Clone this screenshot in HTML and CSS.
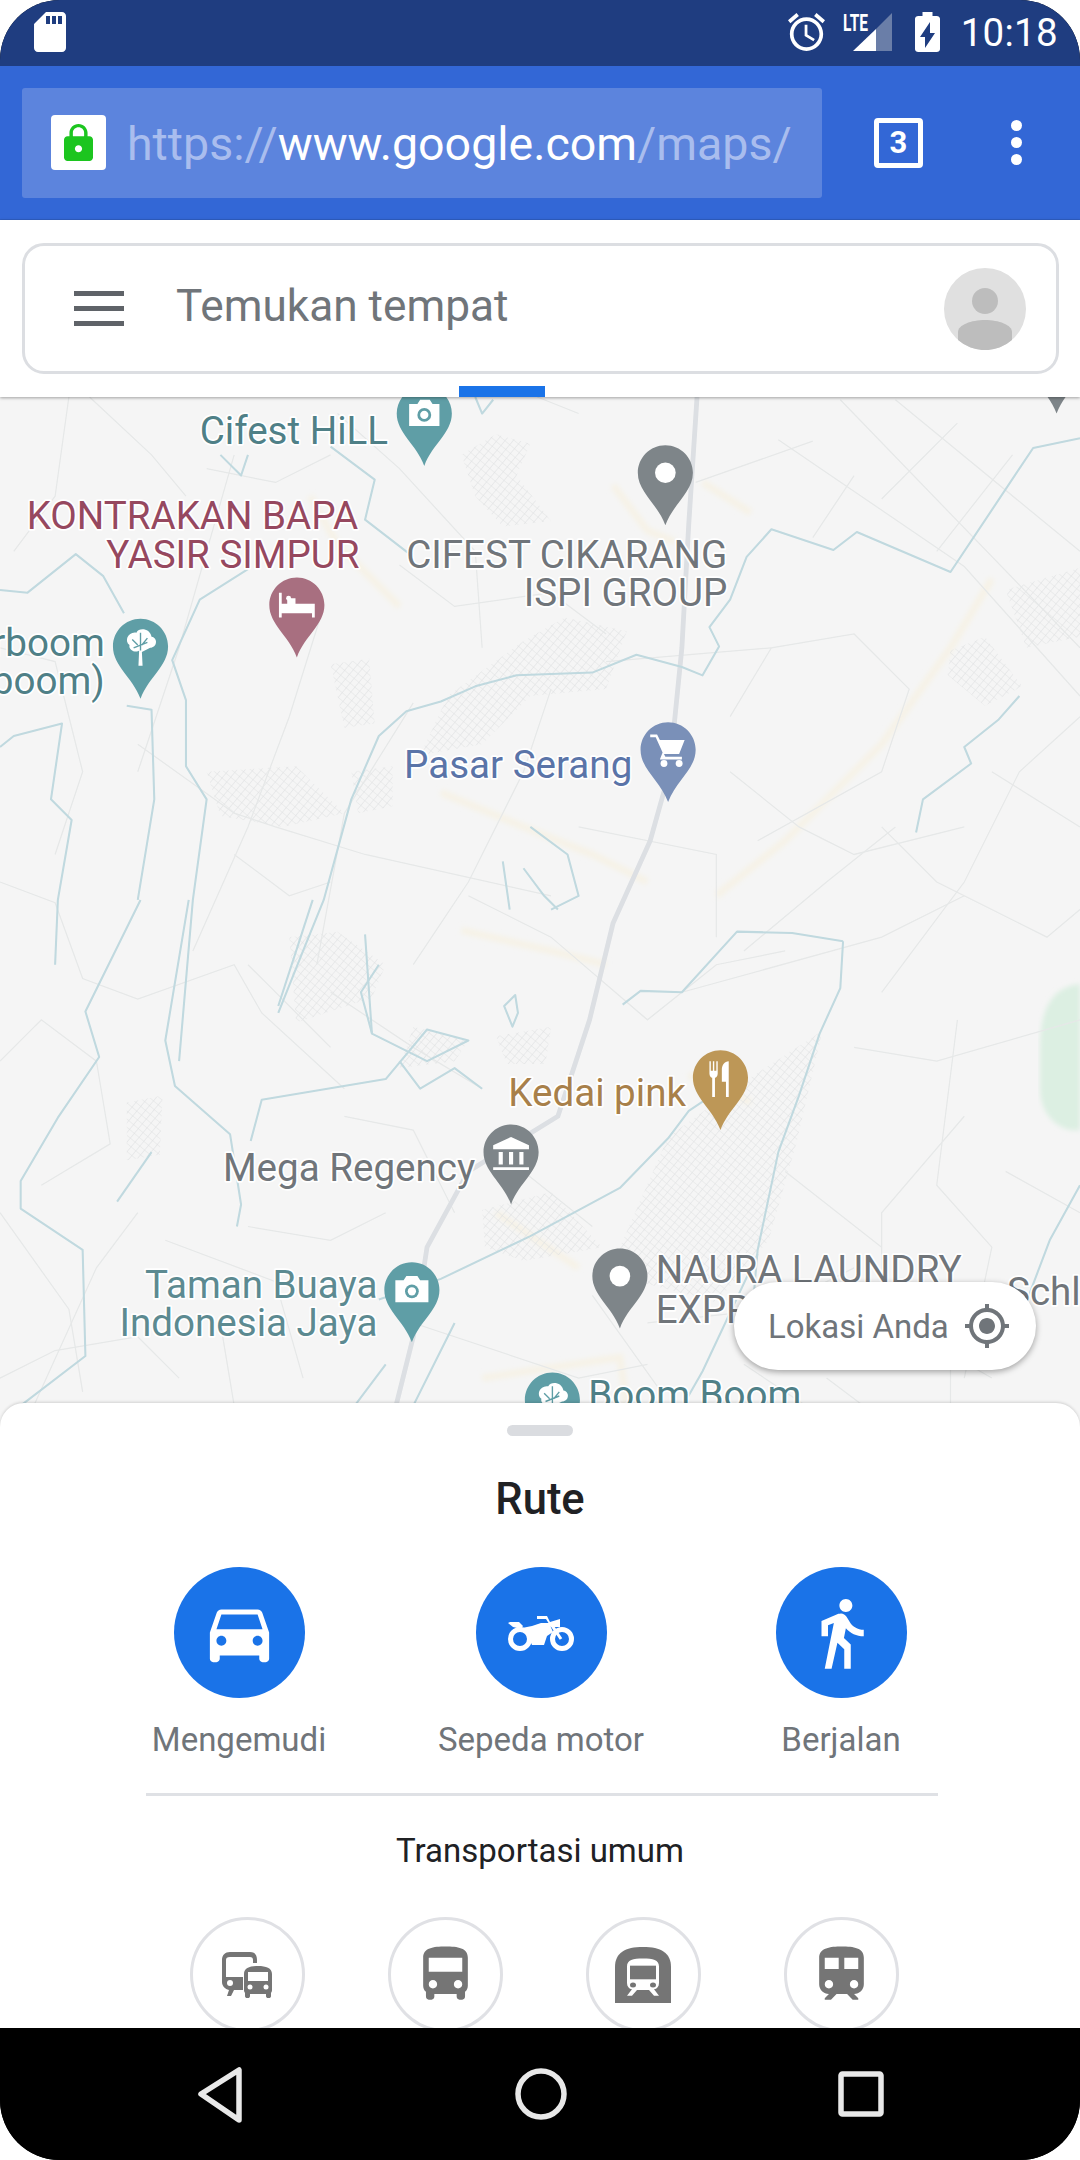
FILE: index.html
```html
<!DOCTYPE html>
<html lang="id">
<head>
<meta charset="utf-8">
<title>Google Maps</title>
<link rel="stylesheet" href="styles.css">
</head>
<body>
<div class="phone">
  <div class="status">
    <svg class="ic-sd" viewBox="4 2 16 20" preserveAspectRatio="none"><path d="M18 2h-8L4.02 8 4 20c0 1.1.9 2 2 2h12c1.1 0 2-.9 2-2V4c0-1.1-.9-2-2-2zm-6 6h-2V4h2v4zm3 0h-2V4h2v4zm3 0h-2V4h2v4z"/></svg>
    <div class="status-right">
      <svg class="ic-alarm" viewBox="2 1.8 20 20.2" preserveAspectRatio="none"><path d="M22 5.72l-4.6-3.86-1.29 1.53 4.6 3.86L22 5.72zM7.88 3.39L6.6 1.86 2 5.71l1.29 1.53 4.59-3.85zM12.5 8H11v6l4.75 2.85.75-1.23-4-2.37V8zM12 4c-4.97 0-9 4.03-9 9s4.03 9 9 9c4.97 0 9-4.03 9-9s-4.03-9-9-9zm0 16c-3.87 0-7-3.13-7-7s3.13-7 7-7 7 3.13 7 7-3.13 7-7 7z"/></svg>
      <svg class="ic-signal" viewBox="0 0 50 40">
        <text class="lte" x="0" y="19" textLength="25" lengthAdjust="spacingAndGlyphs">LTE</text>
        <path class="sig-dim" d="M49 1V39H33V17z"/>
        <path d="M33 17V39H10z"/>
      </svg>
      <svg class="ic-batt" viewBox="7 2 10 20" preserveAspectRatio="none"><path d="M15.67 4H14V2h-4v2H8.33C7.6 4 7 4.6 7 5.33v15.33C7 21.4 7.6 22 8.33 22h7.33c.74 0 1.34-.6 1.34-1.33V5.33C17 4.6 16.4 4 15.67 4zM11 20v-5.5H9L13 7v5.5h2L11 20z"/></svg>
      <span class="clock">10:18</span>
    </div>
  </div>

  <div class="toolbar">
    <div class="urlbox">
      <span class="lockbox">
        <svg class="ic-lock" viewBox="4 1 16 21" preserveAspectRatio="none"><path d="M18 8h-1V6c0-2.76-2.24-5-5-5S7 3.24 7 6v2H6c-1.1 0-2 .9-2 2v10c0 1.1.9 2 2 2h12c1.1 0 2-.9 2-2V10c0-1.1-.9-2-2-2zm-6 9c-1.1 0-2-.9-2-2s.9-2 2-2 2 .9 2 2-.9 2-2 2zm3.1-9H8.9V6c0-1.71 1.39-3.1 3.1-3.1 1.71 0 3.1 1.39 3.1 3.1v2z"/></svg>
      </span>
      <span class="url"><span class="dim">https://</span>www.google.com<span class="dim">/maps/</span></span>
    </div>
    <span class="tabs">3</span>
    <span class="dots"><i></i><i></i><i></i></span>
  </div>

  <div class="header">
    <div class="search">
      <span class="burger"><i></i><i></i><i></i></span>
      <span class="search-text">Temukan tempat</span>
      <svg class="avatar" viewBox="0 0 82 82">
        <circle class="av-bg" cx="41" cy="41" r="41"/>
        <circle class="av-fg" cx="41" cy="33" r="13"/>
        <path class="av-fg" d="M14 72V64C14 57 27 52 41 52S68 57 68 64V72A41 41 0 0 1 14 72z"/>
      </svg>
    </div>
    <span class="tab-mark"></span>
  </div>

  <div class="map">
    <svg class="map-svg" viewBox="0 288 784 747.5" preserveAspectRatio="none">
      <defs>
        <pattern id="hatch" width="4.5" height="4.5" patternUnits="userSpaceOnUse" patternTransform="rotate(40)">
          <path d="M0 0H4.500M0 0V4.500" class="hatch-line"/>
        </pattern>
        <path id="pin" d="M0-20C-11-20-20-11-20 0C-20 14-6 22 0 38C6 22 20 14 20 0C20-11 11-20 0-20z"/>
        <filter id="soft" x="-5%" y="-5%" width="110%" height="110%"><feGaussianBlur stdDeviation=".5"/></filter>
        <filter id="softer" x="-5%" y="-5%" width="110%" height="110%"><feGaussianBlur stdDeviation="2"/></filter>
      </defs>
      <rect class="land" x="0" y="288" width="784" height="748"/>
      <path class="park" d="M784 714C765 716 755 730 755 760V790C755 810 770 822 784 820z" filter="url(#softer)"/>

      <g class="yroads" filter="url(#softer)">
        <path d="M445 352L470 385L490 393M510 350L545 372"/>
        <path d="M225 360L245 395L290 440"/>
        <path d="M720 420L690 470L640 540L600 580L570 610L520 650"/>
        <path d="M320 575L380 600L430 620L470 640"/>
        <path d="M335 675L400 690L440 700M500 780L545 800"/>
        <path d="M360 880L420 920M350 1000L450 985L455 1020"/>
      </g>

      <g class="hatch" filter="url(#soft)">
        <path d="M335 330L360 315L385 322L375 345L400 378L365 382L345 360z"/>
        <path d="M380 465L410 448L455 458L440 500L385 505L350 540L305 548L325 505z"/>
        <path d="M240 482L268 478L272 525L250 528z"/>
        <path d="M690 472L715 462L742 498L715 512L688 490z"/>
        <path d="M730 428L784 412V462L745 470z"/>
        <path d="M150 560L215 556L250 590L205 600L160 592zM255 560L285 556L285 585L260 590z"/>
        <path d="M210 680L245 676L280 700L270 724L215 742z"/>
        <path d="M92 800L118 795L116 838L92 842z"/>
        <path d="M360 752L400 745L396 772L368 772z"/>
        <path d="M450 905L485 825L540 785L597 748L578 830L558 900L520 945L445 925z"/>
        <path d="M350 878L400 865L437 905L380 915L352 905z"/>
        <path d="M300 745L340 755L330 770L290 775z"/>
      </g>

      <g class="roads" filter="url(#soft)">
        <path d="M610 290L784 470M565 319L700 411L784 505M650 290L784 400M695 307L640 362M735 330L680 400M620 345L590 390"/>
        <path d="M505 350L590 320M50 288L40 360L10 400M65 288L110 330L135 360M170 330L130 470L100 560"/>
        <path d="M390 288L420 300M235 440L210 520L180 600L140 690M300 510L250 590L230 700"/>
        <path d="M550 610L640 560L660 500L620 460L560 470L530 520"/>
        <path d="M640 600L680 640L760 680L784 660M640 720L700 640L740 560L784 520"/>
        <path d="M0 640L40 655L60 710L100 725L170 700L190 735L250 790"/>
        <path d="M340 650L400 680L470 740L520 700L570 690M495 720L640 680L700 650"/>
        <path d="M0 770L30 740L70 770L80 830L30 860M0 880L50 950L60 1010"/>
        <path d="M695 740L680 860L720 905L700 1000M700 810L640 880L640 960M570 850L640 905"/>
        <path d="M120 900L200 930L220 1000M300 960L420 1000L470 990M470 960L560 950L620 920"/>
        <path d="M240 720L300 760L350 790M380 850L430 890M430 940L480 1010"/>
        <path d="M0 1000L40 980L100 970L130 1000M160 960L170 1020M600 1000L640 1030M690 1030L690 990"/>
        <path d="M100 540L170 590L200 600L265 620L400 650M440 480L560 470"/>
        <path d="M540 690L600 640L650 600M245 300L290 340L345 400L350 470"/>
        <path d="M400 500L380 560L340 640L300 700M530 560L580 600L620 620L700 600M720 560L784 600"/>
        <path d="M290 410L330 440L400 430L440 460M150 340L200 350L240 330M420 600L520 620L520 680"/>
        <path d="M0 470L40 480L60 560L40 620M170 620L210 650L240 640M180 700L240 760"/>
        <path d="M620 760L680 770L784 740M730 850L784 880M650 960L720 1000M540 990L600 1030"/>
        <path d="M20 1030L70 920L100 880M180 890L240 900L280 880M330 880L300 820L250 810"/>
      </g>

      <path class="highway" filter="url(#soft)" d="M506 288L500 380L495 470L486 560L472 610L445 670L428 740L405 810L340 850L310 905L300 970L285 1030"/>

      <g class="water" filter="url(#soft)">
        <path d="M784 318L750 325L690 415L622 386L605 399L560 384L542 404L530 435L515 455L522 469L510 490L495 484L462 475L430 488L375 490L345 498L320 509L295 516L275 534L255 580L235 653L220 690L202 735"/>
        <path d="M240 324L272 348L265 377L300 404"/>
        <path d="M160 330L175 345L180 330M345 288L350 300L358 290"/>
        <path d="M0 428L20 430L55 402L75 418L90 445"/>
        <path d="M180 413L145 435L125 479L135 508L135 556L150 580L140 653L130 770"/>
        <path d="M92 512L110 515L112 580L100 653"/>
        <path d="M0 542L10 534L45 525L37 580L52 595L42 653L40 700"/>
        <path d="M740 505L725 522L700 542L705 554L670 580L665 604"/>
        <path d="M612 683L610 717L595 750L580 795L565 836L550 907L545 965"/>
        <path d="M452 729L465 719L495 720L535 676L575 677L612 683"/>
        <path d="M542 778L500 806L485 826L450 862L385 897L320 928L275 943"/>
        <path d="M102 653L62 734L72 767L42 811L15 857L15 877L60 907L62 984L15 1020"/>
        <path d="M137 653L120 755L127 788L167 823L175 874L172 890"/>
        <path d="M227 653L202 730"/>
        <path d="M265 678L270 750L310 770L340 755L310 747L280 783L190 798L182 828"/>
        <path d="M290 770L305 790L330 775L350 790M270 750L262 720L275 700"/>
        <path d="M85 872L110 836"/>
        <path d="M372 745L366 730L374 722L376 735z"/>
        <path d="M365 625L370 660M380 630L395 650L405 660M385 600L412 620L420 650L400 660"/>
        <path d="M784 860L762 900L745 945L725 970"/>
        <path d="M550 910L510 995L490 1030M330 960L300 1020M250 1030L280 990"/>
      </g>

      <g class="pin-g" transform="translate(767 262)"><use href="#pin"/></g>

      <g class="teal" transform="translate(308 300)"><use href="#pin"/>
        <path class="w" d="M-11-7H-5L-3-10H4L6-7H11V9H-11z"/><circle class="cut" cx="0" cy="1" r="5"/><circle class="w" cx="0" cy="1" r="3"/></g>
      <text class="lbl t-teal" x="145" y="321">Cifest HiLL</text>

      <g class="pin-g" transform="translate(483 343)"><use href="#pin"/><circle class="w" cy="0" r="7.5"/></g>

      <text class="lbl t-rose end" x="260" y="383">KONTRAKAN BAPA</text>
      <text class="lbl t-rose end" x="261" y="411">YASIR SIMPUR</text>
      <g class="rose" transform="translate(215.5 439)"><use href="#pin"/>
        <path class="w" d="M-13-9H-11V-1H-7V-5H-1V-1H13V9H11V6H-11V9H-13z"/><circle class="w" cx="-6" cy="-5" r="1.800"/></g>

      <text class="lbl t-gray end" x="528" y="411">CIFEST CIKARANG</text>
      <text class="lbl t-gray end" x="528" y="439">ISPI GROUP</text>

      <text class="lbl t-teal end" x="76" y="475">rboom</text>
      <text class="lbl t-teal end" x="76" y="503">boom)</text>
      <g class="teal" transform="translate(102 469)"><use href="#pin"/>
        <path class="w" d="M-1.500 14H1.500L1 4L7 1C12 1 13-6 8-7C7-13-1-14-3-10C-9-11-12-4-8-1C-9 3-3 5-1 3z"/>
        <path class="teal-cut" d="M-6-5L-2-1M5-6L1-1M-5 1L5-3M0-10V3"/></g>

      <text class="lbl t-blue end" x="459" y="564">Pasar Serang</text>
      <g class="blue" transform="translate(485 544)"><use href="#pin"/>
        <path class="w" d="M-13-11H-8L-6-7H12L8 3H-3L-2 5H10V7H-6L-4 2L-9-9H-13z"/><circle class="w" cx="-3" cy="10" r="2.500"/><circle class="w" cx="8" cy="10" r="2.500"/></g>

      <text class="lbl t-gold" x="369" y="802">Kedai pink</text>
      <g class="gold" transform="translate(523 782)"><use href="#pin"/>
        <path class="w" d="M-8-12H-7V-5H-5.500V-12H-4.500V-5H-3V-12H-2V-3C-2-1-3 0-4 0V14H-6V0C-7 0-8-1-8-3zM6-12V14H4V3H1V-6C1-9 3-12 6-12z"/></g>

      <text class="lbl t-gray end" x="345" y="856">Mega Regency</text>
      <g class="pin-g" transform="translate(371 836)"><use href="#pin"/>
        <path class="w" d="M0-11L13-5V-2H-13V-5zM-9 0H-6V9H-9zM-1.500 0H1.500V9H-1.500zM6 0H9V9H6zM-13 11H13V13H-13z"/></g>

      <text class="lbl t-teal2 end" x="274" y="941">Taman Buaya</text>
      <text class="lbl t-teal2 end" x="274" y="969">Indonesia Jaya</text>
      <g class="teal" transform="translate(299 936)"><use href="#pin"/>
        <path class="w" d="M-12-7H-6L-4-10H4L6-7H12V9H-12z"/><circle class="cut" cx="0" cy="1" r="5"/><circle class="w" cx="0" cy="1" r="3"/></g>

      <g class="pin-g" transform="translate(450 926)"><use href="#pin"/><circle class="w" cy="0" r="7.500"/></g>
      <text class="lbl t-gray" x="476" y="930">NAURA LAUNDRY</text>
      <text class="lbl t-gray" x="476" y="959">EXPRESS</text>
      <text class="lbl t-gray" x="731" y="946">Schlu</text>

      <g class="teal" transform="translate(401 1016)"><use href="#pin"/>
        <path class="w" d="M-1.500 14H1.500L1 4L7 1C12 1 13-6 8-7C7-13-1-14-3-10C-9-11-12-4-8-1C-9 3-3 5-1 3z"/>
        <path class="teal-cut" d="M-6-5L-2-1M5-6L1-1M-5 1L5-3M0-10V3"/></g>
      <text class="lbl t-teal" x="427" y="1021">Boom Boom</text>
    </svg>

    <div class="locate">
      <span class="locate-text">Lokasi Anda</span>
      <svg class="ic-gps" viewBox="0 0 24 24"><path d="M12 8c-2.210 0-4 1.790-4 4s1.790 4 4 4 4-1.790 4-4-1.790-4-4-4zm8.940 3c-.46-4.170-3.770-7.480-7.940-7.940V1h-2v2.060C6.830 3.520 3.520 6.830 3.060 11H1v2h2.060c.46 4.170 3.770 7.480 7.940 7.940V23h2v-2.060c4.170-.46 7.480-3.770 7.940-7.940H23v-2h-2.060zM12 19c-3.870 0-7-3.130-7-7s3.130-7 7-7 7 3.130 7 7-3.130 7-7 7z"/></svg>
    </div>
  </div>

  <div class="sheet">
    <span class="handle"></span>
    <h1 class="title">Rute</h1>
    <div class="modes">
      <div class="mode">
        <span class="round">
          <svg class="ic-car" viewBox="0 0 24 24"><path d="M18.920 6.010C18.720 5.420 18.160 5 17.500 5h-11c-.66 0-1.210.42-1.420 1.010L3 12v8c0 .55.45 1 1 1h1c.55 0 1-.45 1-1v-1h12v1c0 .55.45 1 1 1h1c.55 0 1-.45 1-1v-8l-2.080-5.990zM6.500 16c-.83 0-1.500-.67-1.500-1.500S5.670 13 6.500 13s1.500.67 1.500 1.500S7.330 16 6.500 16zm11 0c-.83 0-1.500-.67-1.500-1.500s.67-1.500 1.500-1.500 1.500.67 1.500 1.500-.67 1.500-1.500 1.500zM5 11l1.500-4.500h11L19 11H5z"/></svg>
        </span>
        <span class="mode-label">Mengemudi</span>
      </div>
      <div class="mode">
        <span class="round">
          <svg class="ic-bike" viewBox="0 0 66 36">
            <circle class="wheel" cx="12" cy="24" r="9.500"/>
            <circle class="wheel" cx="54" cy="24" r="9.500"/>
            <path d="M0 8L2 7H11L15 11L13 14L5 12zM14 13L24 11L33 8H41L45 17L39 21L36 30H24L20 21zM29 1H39L42 7L52 4V12L43 12L38 4H29z"/>
            <path class="fork" d="M43 9L53 24"/>
          </svg>
        </span>
        <span class="mode-label">Sepeda motor</span>
      </div>
      <div class="mode">
        <span class="round">
          <svg class="ic-walk" viewBox="0 0 24 24"><path d="M13.500 5.500c1.100 0 2-.9 2-2s-.9-2-2-2-2 .9-2 2 .9 2 2 2zM9.800 8.900L7 23h2.100l1.800-8 2.100 2v6h2v-7.500l-2.100-2 .6-3C14.800 12 16.800 13 19 13v-2c-1.900 0-3.500-1-4.300-2.400l-1-1.600c-.4-.6-1-1-1.700-1-.3 0-.5.100-.8.100L6 8.300V13h2V9.600l1.800-.7"/></svg>
        </span>
        <span class="mode-label">Berjalan</span>
      </div>
    </div>
    <div class="divider"></div>
    <div class="transit-title">Transportasi umum</div>
    <div class="transit">
      <span class="ring">
        <svg class="ic-mix" viewBox="0 0 50 46">
          <path d="M8 0H28C33 0 35 3 35 8V11H31V8C31 6 30 5 28 5H8C5 5 4 6 4 8V25H21V38H16H12L9 44H5L7 38C3 37 0 34 0 30V8C0 3 3 0 8 0z"/>
          <circle class="w" cx="8" cy="31" r="3"/>
          <path d="M36 14C44 14 50 16 50 22V38C50 39.500 49.500 40 49 41V44C49 45.500 48 46 47 46H46C45 46 44 45.500 44 44V42H28V44C28 45.500 27 46 26 46H25C24 46 23 45.500 23 44V41C22.500 40 22 39.500 22 38V22C22 16 28 14 36 14z"/>
          <rect class="w" x="26" y="20" width="20" height="9"/>
          <circle class="w" cx="28" cy="35" r="2.500"/><circle class="w" cx="44" cy="35" r="2.500"/>
        </svg>
      </span>
      <span class="ring">
        <svg class="ic-bus" viewBox="0 0 24 24"><path d="M4 16c0 .88.39 1.670 1 2.220V20c0 .55.45 1 1 1h1c.55 0 1-.45 1-1v-1h8v1c0 .55.45 1 1 1h1c.55 0 1-.45 1-1v-1.780c.61-.55 1-1.340 1-2.220V6c0-3.500-3.580-4-8-4s-8 .5-8 4v10zm3.500 1c-.83 0-1.500-.67-1.500-1.500S6.670 14 7.500 14s1.500.67 1.500 1.500S8.330 17 7.500 17zm9 0c-.83 0-1.500-.67-1.500-1.500s.67-1.500 1.500-1.500 1.500.67 1.500 1.500-.67 1.500-1.500 1.500zm1.500-6H6V6h12v5z"/></svg>
      </span>
      <span class="ring">
        <svg class="ic-sub" viewBox="0 0 56 78" preserveAspectRatio="none">
          <path d="M28 0C46 0 56 8 56 28V78H0V28C0 8 10 0 28 0z"/>
          <path class="w" d="M28 16C38 16 44 18 44 27V50C44 55 42 58 39 59L44 68H39L34 60H22L17 68H12L17 59C14 58 12 55 12 50V27C12 18 18 16 28 16z"/>
          <rect x="15" y="26" width="26" height="19"/>
          <ellipse cx="18" cy="53" rx="3" ry="3.500"/><ellipse cx="38" cy="53" rx="3" ry="3.500"/>
        </svg>
      </span>
      <span class="ring">
        <svg class="ic-train" viewBox="0 0 24 24"><path d="M12 2c-4 0-8 .5-8 4v9.500C4 17.430 5.570 19 7.500 19L6 20.500v.5h2.230l2-2H14l2 2h2v-.5L16.500 19c1.930 0 3.500-1.570 3.500-3.500V6c0-3.500-3.580-4-8-4zM7.500 17c-.83 0-1.500-.67-1.500-1.500S6.670 14 7.500 14s1.500.67 1.500 1.500S8.330 17 7.500 17zm3.500-7H6V6h5v4zm2 0V6h5v4h-5zm3.500 7c-.83 0-1.500-.67-1.500-1.500s.67-1.500 1.500-1.500 1.500.67 1.500 1.500-.67 1.500-1.500 1.500z"/></svg>
      </span>
    </div>
  </div>

  <div class="nav">
    <svg class="nav-icons" viewBox="0 0 1080 132">
      <path d="M239 42V92L201 66z"/>
      <circle cx="541" cy="66" r="23"/>
      <rect x="841" y="46" width="40" height="40" rx="1.500"/>
    </svg>
  </div>
</div>
</body>
</html>
```
FILE: styles.css
```css
* { box-sizing: border-box; }
html, body { margin: 0; padding: 0; background: #fff; }
body { font-family: Roboto, "Liberation Sans", sans-serif; }

.phone {
  width: 1080px;
  height: 2160px;
  display: flex;
  flex-direction: column;
  border-radius: 60px;
  overflow: hidden;
  background: #000;
}

/* status bar */
.status {
  height: 66px;
  flex: none;
  background: #1f3d80;
  display: flex;
  align-items: center;
  justify-content: space-between;
  padding: 0 22px 0 34px;
  fill: #fff;
  color: #fff;
}
.ic-sd { width: 32px; height: 40px; margin-top: -2px; }
.status-right { display: flex; align-items: center; }
.ic-alarm { width: 37px; height: 38px; margin-right: 18px; margin-top: -2px; }
.ic-signal { width: 50px; height: 40px; margin-right: 22px; margin-top: -2px; overflow: visible; }
.sig-dim { fill: #6a7ea8; }
.lte { font: 700 23px Roboto, sans-serif; fill: #fff; }
.ic-batt { width: 25px; height: 40px; margin-right: 21px; margin-top: -2px; }
.clock { font-size: 38.500px; line-height: 66px; letter-spacing: .3px; }

/* browser toolbar */
.toolbar {
  height: 154px;
  flex: none;
  background: #3367d6;
  display: flex;
  align-items: center;
  padding: 0 0 0 22px;
  box-shadow: inset 0 -1px 0 #2f5fc4;
}
.urlbox {
  width: 800px;
  height: 110px;
  margin-top: -1px;
  background: #5c84dd;
  border-radius: 3px;
  display: flex;
  align-items: center;
  padding-left: 29px;
}
.lockbox {
  width: 55px;
  height: 55px;
  background: #fff;
  border-radius: 4px;
  display: flex;
  align-items: center;
  justify-content: center;
}
.ic-lock { width: 29px; height: 37px; fill: #1cc51f; }
.url {
  margin-left: 21px;
  font-size: 46.500px;
  line-height: 56px;
  color: #fff;
  white-space: nowrap;
  padding-top: 2px;
}
.dim { color: #a9bdee; }
.tabs {
  margin-left: 52px;
  width: 49px;
  height: 50px;
  margin-top: -1px;
  border: 5px solid #fff;
  border-radius: 4px;
  display: flex;
  align-items: center;
  justify-content: center;
  color: #fff;
  font-size: 31px;
  font-weight: 700;
}
.dots {
  margin-left: 88px;
  display: flex;
  flex-direction: column;
  gap: 6px;
  margin-top: -1px;
}
.dots i { display: block; width: 11px; height: 11px; border-radius: 50%; background: #fff; }

/* maps header */
.header {
  height: 177px;
  flex: none;
  position: relative;
  z-index: 2;
  background: #fff;
  padding: 23px 21px 0 22px;
  box-shadow: 0 1px 3px rgba(0,0,0,.35);
}
.search {
  height: 131px;
  border: 3px solid #dcdee2;
  border-radius: 22px;
  display: flex;
  align-items: center;
  padding: 0 30px 0 49px;
}
.burger { display: flex; flex-direction: column; gap: 9.500px; width: 50px; }
.burger i { display: block; height: 5.500px; background: #5f6368; }
.search-text {
  margin-left: 52px;
  flex: 1;
  font-size: 44.200px;
  line-height: 50px;
  margin-top: -6px;
  color: #70757a;
}
.avatar { width: 82px; height: 82px; }
.av-bg { fill: #e0e0e0; }
.av-fg { fill: #bdbdbd; }
.tab-mark {
  position: absolute;
  left: 459px;
  bottom: 0;
  width: 86px;
  height: 11px;
  background: #1a73e8;
}

/* map */
.map {
  height: 1030px;
  flex: none;
  position: relative;
  background: #f5f5f5;
}
.map-svg { display: block; width: 1080px; height: 1030px; }
.land { fill: #f5f5f5; }
.park { fill: #dcefe2; }
.water path { fill: none; stroke: #c0d9df; stroke-width: 1.500; stroke-linejoin: round; }
.roads path { fill: none; stroke: #e6e8e8; stroke-width: .9; }
.yroads path { fill: none; stroke: #f6f2e6; stroke-width: 5; }
.highway { fill: none; stroke: #dcdfe3; stroke-width: 3.500; }
.hatch path { fill: url(#hatch); }
.hatch-line { fill: none; stroke: #dfe1e2; stroke-width: .8; }

.lbl {
  font-family: Roboto, sans-serif;
  font-size: 28px;
  paint-order: stroke;
  stroke: #fff;
  stroke-width: 2.500px;
  stroke-linejoin: round;
  transform: translateY(.8px);
}
.end { text-anchor: end; }
.t-teal { fill: #4f8087; }
.t-teal2 { fill: #5c8a91; }
.t-rose { fill: #96485f; }
.t-gray { fill: #70757a; }
.t-blue { fill: #5a74a8; }
.t-gold { fill: #a8804a; }

.teal { fill: #5f9ea6; }
.rose { fill: #a86f80; }
.blue { fill: #7a90b8; }
.gold { fill: #bd9757; }
.pin-g { fill: #7e8589; }
.w { fill: #fff; }
.cut { fill: #5f9ea6; }
.teal-cut { fill: none; stroke: #5f9ea6; stroke-width: 1; }

.locate {
  position: absolute;
  left: 734px;
  top: 885px;
  width: 302px;
  height: 88px;
  border-radius: 44px;
  background: #fff;
  box-shadow: 0 2px 6px rgba(0,0,0,.35);
  display: flex;
  align-items: center;
  padding-left: 34px;
}
.locate-text { font-size: 33px; color: #70757a; white-space: nowrap; }
.ic-gps { width: 48px; height: 48px; margin-left: 14px; fill: #70757a; }

/* bottom sheet */
.sheet {
  height: 625px;
  flex: none;
  margin-top: -24px;
  position: relative;
  z-index: 1;
  background: #fff;
  border-radius: 24px 24px 0 0;
  box-shadow: 0 -1px 3px rgba(0,0,0,.15);
  overflow: hidden;
  display: flex;
  flex-direction: column;
  align-items: center;
  padding-top: 22px;
}
.handle { width: 66px; height: 11px; border-radius: 6px; background: #dadce0; flex: none; }
.title {
  margin: 42px 0 0;
  font-size: 43.500px;
  line-height: 44px;
  font-weight: 500;
  color: #202124;
}
.modes {
  margin-top: 45px;
  width: 100%;
  display: grid;
  grid-template-columns: 302px 302px 298px;
  justify-content: start;
  padding-left: 88px;
}
.mode { display: flex; flex-direction: column; align-items: center; }
.round {
  width: 131px;
  height: 131px;
  border-radius: 50%;
  background: #1a73e8;
  display: flex;
  align-items: center;
  justify-content: center;
  fill: #fff;
}
.ic-car { width: 79px; height: 79px; }
.ic-walk { width: 78px; height: 78px; }
.ic-bike { width: 66px; height: 36px; }
.wheel { fill: none; stroke: #fff; stroke-width: 5; }
.fork { stroke: #fff; stroke-width: 3; fill: none; }
.mode-label {
  margin-top: 23px;
  font-size: 33px;
  line-height: 38px;
  color: #70757a;
  white-space: nowrap;
}
.divider { margin: 34px 0 0 4px; width: 792px; height: 3px; background: #dfe1e5; flex: none; }
.transit-title {
  margin-top: 36px;
  font-size: 33px;
  line-height: 38px;
  color: #202124;
}
.transit {
  margin-top: 47px;
  display: flex;
  gap: 83px;
  margin-left: 8px;
}
.ring {
  flex: none;
  width: 115px;
  height: 115px;
  border: 3px solid #e0e1e5;
  border-radius: 50%;
  display: flex;
  align-items: center;
  justify-content: center;
  fill: #757575;
}
.ic-mix { width: 50px; height: 46px; }
.ic-bus { width: 67px; height: 67px; }
.ic-sub { width: 56px; height: 56px; }
.ic-train { width: 67px; height: 67px; }

/* navigation bar */
.nav { flex: 1; background: #000; }
.nav-icons {
  display: block;
  width: 1080px;
  height: 132px;
  fill: none;
  stroke: #e8e8e8;
  stroke-width: 5.500;
  stroke-linejoin: round;
}
```
